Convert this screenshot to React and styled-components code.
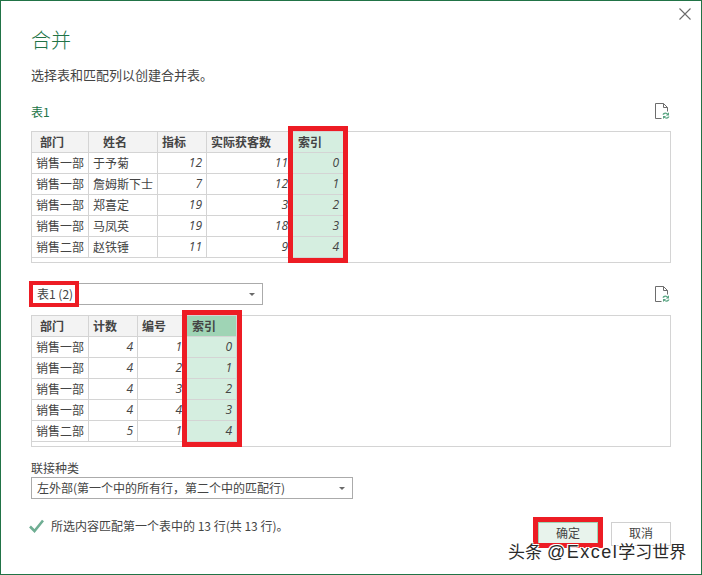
import React from 'react';
import styled, { createGlobalStyle } from 'styled-components';

const GlobalStyle = createGlobalStyle`
  html, body {
    margin: 0;
    padding: 0;
    background: #ffffff;
  }
`

const FONT = `'Noto Sans CJK SC', 'Noto Sans', sans-serif`

const Dialog = styled.div`
  position: relative;
  box-sizing: border-box;
  width: 702px;
  height: 575px;
  padding: 25px 30px 0;
  overflow: hidden;

  background: #ffffff;
  border: 1px solid #217346;
  font-family: ${FONT};
  color: #444444;
`

const TitleRow = styled.div`
  display: flex;
  justify-content: space-between;
  align-items: flex-start;
  height: 28px;
`

const Title = styled.h1`
  margin: 0;
  font-size: 20px;
  font-weight: 300;
  line-height: 28px;
  color: #217346;
`

const CloseButton = styled.svg`
  display: block;
  width: 12px;
  height: 12px;
  margin: -18px -20px 0 0;
`

const Subtitle = styled.p`
  margin: 11px 0 0;
  font-size: 13px;
  line-height: 20px;
`

const SectionRow = styled.div`
  display: flex;
  justify-content: space-between;
  align-items: center;
  height: ${props => props.$height}px;
  margin-top: ${props => props.$top}px;
`

const SectionLabel = styled.span`
  font-size: 12px;
  line-height: 16px;
  color: #217346;
`

const RefreshIcon = styled.svg`
  display: block;
  width: 16px;
  height: 17px;
`

const TablePanel = styled.div`
  display: flex;
  align-items: flex-start;
  box-sizing: border-box;
  height: 132px;
  margin-top: ${props => props.$top}px;
  border: 1px solid #d4d4d4;
`

const Column = styled.div`
  position: relative;
  display: flex;
  flex-direction: column;
  flex: none;
  width: ${props => props.$width}px;
`

const HeadCell = styled.div`
  box-sizing: border-box;
  height: 21px;
  padding-left: ${props => props.$indent}px;

  font-size: 12px;
  font-weight: 700;
  line-height: 20px;
  white-space: nowrap;
  overflow: hidden;
  color: #444444;
  background: ${props => props.$background};
  border-right: 1px solid #d4d4d4;
  border-bottom: 1px solid #d4d4d4;
`

const BodyCell = styled.div`
  box-sizing: border-box;
  height: 21px;
  padding: 0 4px;

  font-size: 12px;
  line-height: 20px;
  white-space: nowrap;
  color: #444444;
  background: ${props => props.$index ? '#d5eee0' : '#ffffff'};
  border-right: 1px solid #d4d4d4;
  border-bottom: 1px solid #d4d4d4;
`

const NumberCell = styled(BodyCell)`
  font-family: 'Open Sans', sans-serif;
  font-style: italic;
  text-align: right;
`

const ColumnMark = styled.div`
  position: absolute;
  top: -6px;
  right: ${props => props.$right}px;
  bottom: -5px;
  left: -5px;
  border: 5px solid #ed1c24;
`

const SelectBox = styled.div`
  position: relative;
  display: flex;
  justify-content: space-between;
  align-items: center;
  box-sizing: border-box;
  width: ${props => props.$width}px;
  height: 22px;
  padding: 0 7px 0 5px;

  font-size: 12px;
  line-height: 20px;
  background: #ffffff;
  border: 1px solid #ababab;
`

const SelectMark = styled.div`
  position: absolute;
  top: -3px;
  left: -3px;
  width: 50px;
  height: 26px;
  box-sizing: border-box;
  border: 4px solid #ed1c24;
`

const SelectArrow = styled.span`
  width: 0;
  height: 0;
  border-top: 3px solid #6a6a6a;
  border-left: 3px solid transparent;
  border-right: 3px solid transparent;
`

const FieldLabel = styled.div`
  margin-top: 13px;
  margin-bottom: 1px;
  font-size: 12px;
  line-height: 16px;
`

const Footer = styled.div`
  display: flex;
  justify-content: space-between;
  align-items: flex-start;
  margin-top: 19px;
`

const Status = styled.div`
  display: flex;
  align-items: center;
  gap: 7px;
  margin-left: -2px;
  font-size: 12px;
  line-height: 16px;
`

const CheckIcon = styled.svg`
  display: block;
  width: 15px;
  height: 14px;
`

const Buttons = styled.div`
  display: flex;
  gap: 13px;
  margin-top: 4px;
`

const Button = styled.button`
  position: relative;
  box-sizing: border-box;
  width: 60px;
  height: 24px;
  padding: 0 0 2px;

  font-family: ${FONT};
  font-size: 12px;
  line-height: 16px;
  color: #444444;
  background: ${props => props.$primary ? '#e8f3ec' : '#ffffff'};
  border: ${props => props.$primary ? '1px solid #9fd4b5' : '1px solid #d0d0d0'};
`

const ButtonMark = styled.span`
  position: absolute;
  top: -6px;
  right: -6px;
  bottom: -3px;
  left: -6px;
  border: 5px solid #ed1c24;
`

const Watermark = styled.div`
  position: absolute;
  left: 507px;
  top: 541px;
  font-size: 17px;
  line-height: 18px;
  white-space: nowrap;
  color: #2a2a2a;
  text-shadow: 1px 1px 0 #ffffff, -1px -1px 0 #ffffff, 1px -1px 0 #ffffff, -1px 1px 0 #ffffff;
`

const WatermarkHandle = styled.span`
  margin-left: 5px;
  font-family: 'Liberation Sans', sans-serif;
  font-size: 18px;
  letter-spacing: 1.5px;
`

const Refresh = () => (
    <RefreshIcon viewBox="0 0 16 17">
        <path d="M6.5 15.5H0.5V0.5H8.5L12.5 4.5V8.5M8.5 0.5V4.5H12.5" fill="none" stroke="#6d6d6d" />
        <g transform="translate(-1 0.5)">
            <path d="M8.5 11.2C8.8 9.2 11.8 8.2 13.6 10L15 8.8V12H11.8L13 10.8C12 9.9 10.6 10.2 10 11.2Z" fill="#5aa583" />
            <path d="M15.5 13C15.2 15 12.2 16 10.4 14.2L9 15.4V12.4H12.2L11 13.5C12 14.4 13.4 14 14 13Z" fill="#5aa583" />
        </g>
    </RefreshIcon>
)

const firstTable = [
    { title: '部门', indent: 8, width: 57, cells: ['销售一部', '销售一部', '销售一部', '销售一部', '销售二部'] },
    { title: '姓名', indent: 14, width: 69, cells: ['于予菊', '詹姆斯下士', '郑喜定', '马凤英', '赵铁锤'] },
    { title: '指标', indent: 4, width: 49, numeric: true, cells: [12, 7, 19, 19, 11] },
    { title: '实际获客数', indent: 4, width: 86, numeric: true, cells: [11, 12, 3, 18, 9] },
    { title: '索引', indent: 5, width: 51, numeric: true, index: true, markRight: -4, cells: [0, 1, 2, 3, 4] },
]

const secondTable = [
    { title: '部门', indent: 8, width: 57, cells: ['销售一部', '销售一部', '销售一部', '销售一部', '销售二部'] },
    { title: '计数', indent: 4, width: 49, numeric: true, cells: [4, 4, 4, 4, 5] },
    { title: '编号', indent: 4, width: 49, numeric: true, cells: [1, 2, 3, 4, 1] },
    { title: '索引', indent: 5, width: 50, numeric: true, index: true, selected: true, markRight: -5, cells: [0, 1, 2, 3, 4] },
]

const headBackground = (column) => {
    if (column.selected) return '#9fd4b5';
    if (column.index) return '#d5eee0';
    return '#f3f3f3';
}

const DataTable = ({ columns, top }) => (
    <TablePanel $top={top}>
        {columns.map((column) => {
            const Cell = column.numeric ? NumberCell : BodyCell;
            return (
                <Column key={column.title} $width={column.width}>
                    <HeadCell $indent={column.indent} $background={headBackground(column)}>
                        {column.title}
                    </HeadCell>
                    {column.cells.map((value, i) => (
                        <Cell key={i} $index={column.index}>{value}</Cell>
                    ))}
                    {column.index && <ColumnMark $right={column.markRight} />}
                </Column>
            );
        })}
    </TablePanel>
)

const App = () => {
    return (
        <Dialog>
            <GlobalStyle />
            <TitleRow>
                <Title>合并</Title>
                <CloseButton viewBox="0 0 12 12">
                    <path d="M0.5 0.5L11.5 11.5M11.5 0.5L0.5 11.5" stroke="#6a6a6a" strokeWidth="1.1" fill="none" />
                </CloseButton>
            </TitleRow>
            <Subtitle>选择表和匹配列以创建合并表。</Subtitle>

            <SectionRow $height={17} $top={18}>
                <SectionLabel>表1</SectionLabel>
                <Refresh />
            </SectionRow>
            <DataTable columns={firstTable} top={11} />

            <SectionRow $height={22} $top={20}>
                <SelectBox $width={232}>
                    表1 (2)
                    <SelectArrow />
                    <SelectMark />
                </SelectBox>
                <Refresh />
            </SectionRow>
            <DataTable columns={secondTable} top={10} />

            <FieldLabel>联接种类</FieldLabel>
            <SelectBox $width={322}>
                左外部(第一个中的所有行，第二个中的匹配行)
                <SelectArrow />
            </SelectBox>

            <Footer>
                <Status>
                    <CheckIcon viewBox="0 0 15 14">
                        <path d="M1 7.5L5.5 12L14 1.5" fill="none" stroke="#6fae93" strokeWidth="2.6" />
                    </CheckIcon>
                    所选内容匹配第一个表中的 13 行(共 13 行)。
                </Status>
                <Buttons>
                    <Button $primary>
                        确定
                        <ButtonMark />
                    </Button>
                    <Button>取消</Button>
                </Buttons>
            </Footer>

            <Watermark>头条<WatermarkHandle>@Excel</WatermarkHandle>学习世界</Watermark>
        </Dialog>
    );
};

export default App;
